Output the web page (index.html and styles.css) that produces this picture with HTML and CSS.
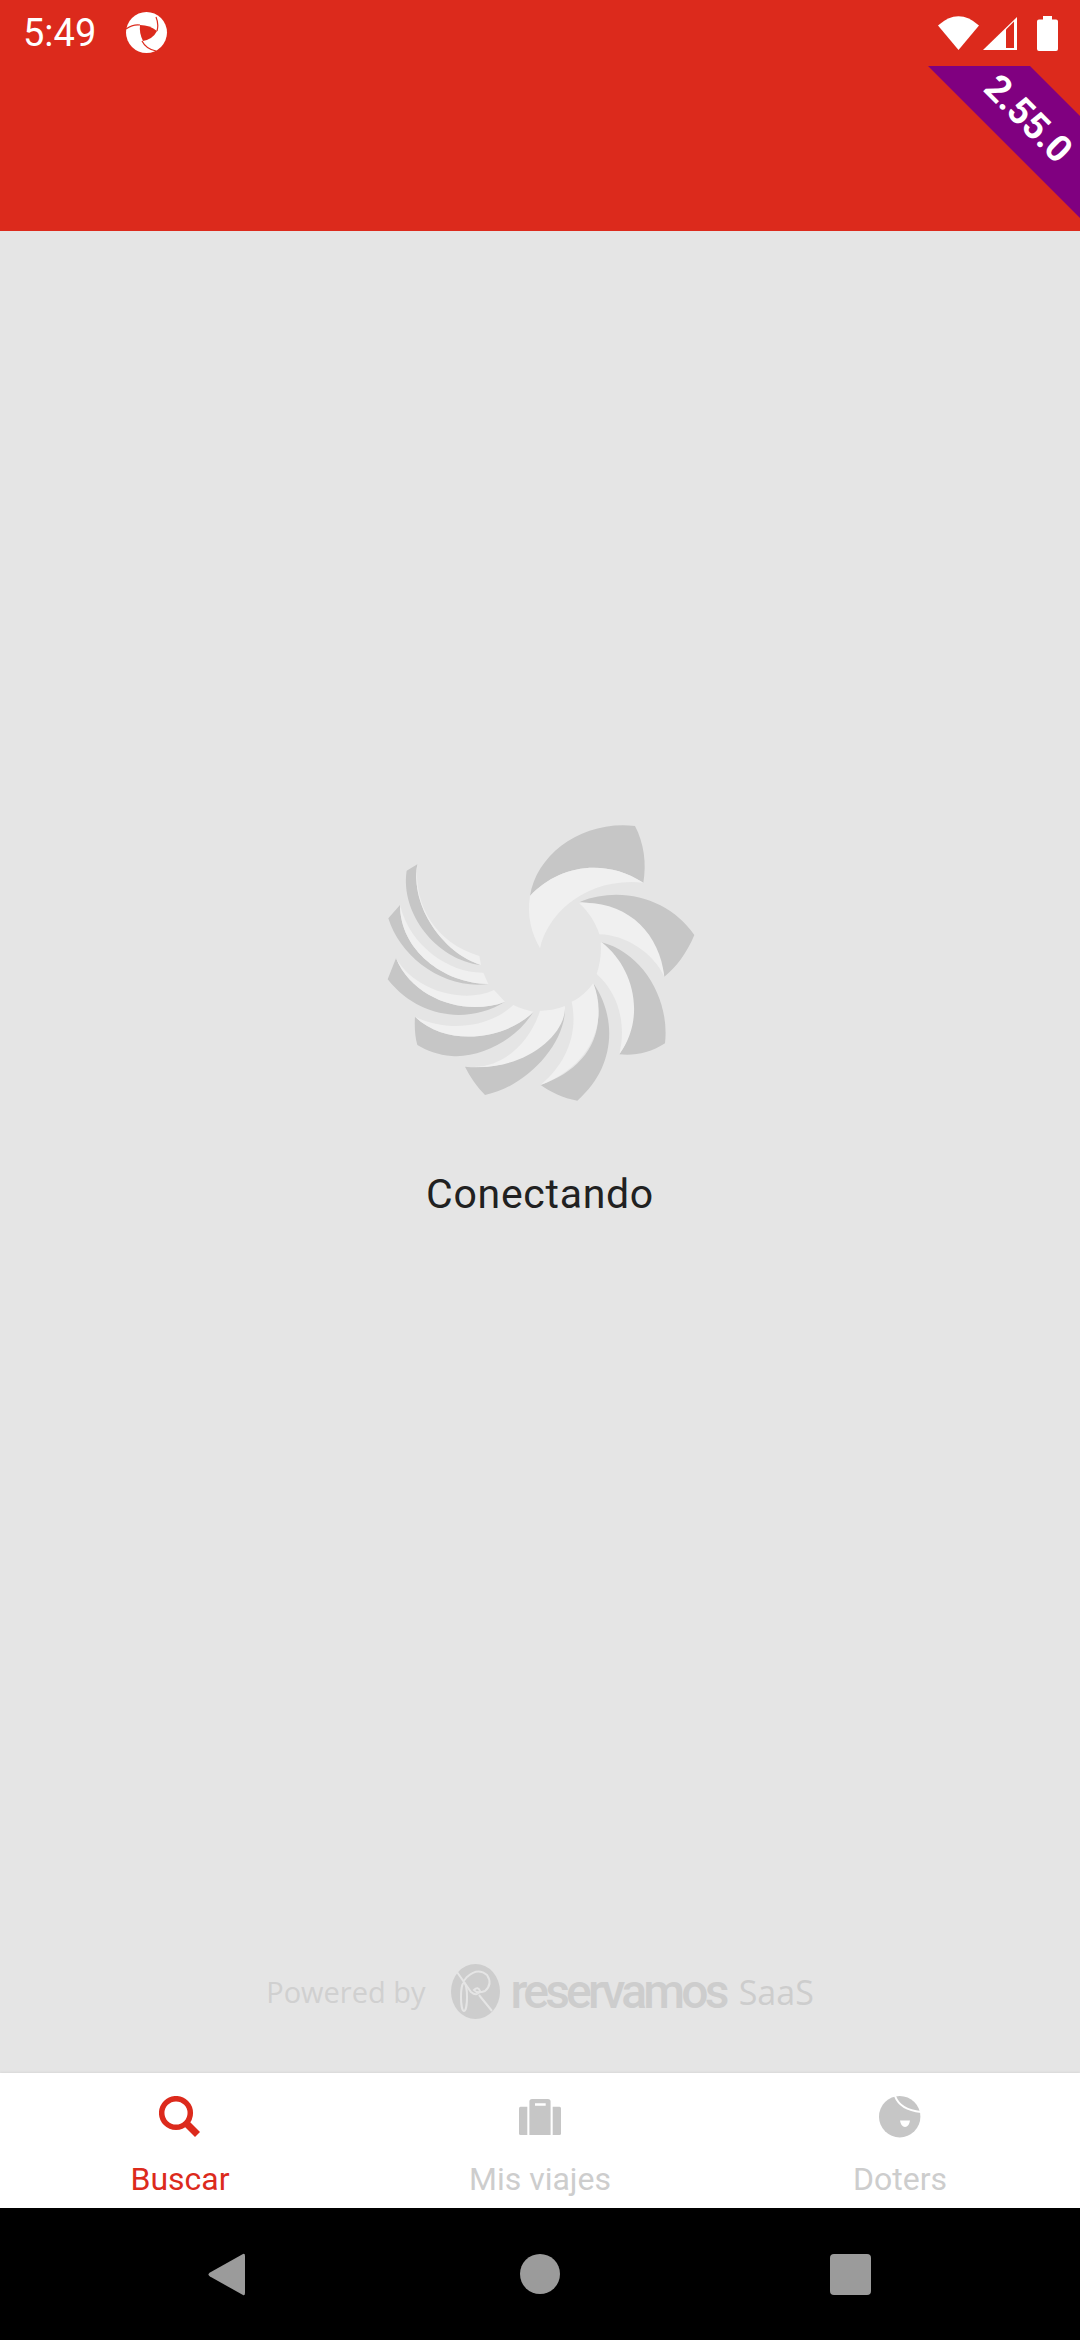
FILE: index.html
```html
<!DOCTYPE html>
<html lang="es">
<head>
    <meta charset="UTF-8">
    <title>Conectando</title>
    <link rel="stylesheet" href="styles.css">
</head>
<body>
<div class="screen">
    <div class="header">
        <div class="status">
            <span class="time">5:49</span>
            <svg class="app-icon" width="42" height="42" viewBox="0 0 42 42">
                <circle cx="20.5" cy="20.5" r="20.5" fill="#fff"/>
                <path d="M14 13Q24 13 31 19Q27 27 17 29Q13 21 14 13Z" fill="#dc2a1c"/>
                <path d="M0 17Q7 12 14 13M30 5Q33 12 31 19M16 29Q20 37 30 39" fill="none" stroke="#dc2a1c" stroke-width="1.2"/>
            </svg>
            <div class="status-right">
                <svg width="41" height="34" viewBox="0 0 41 34"><path d="M0 9.500Q20.500 -9 41 9.500L20.500 34Z" fill="#fff"/></svg>
                <svg class="signal" width="34" height="33" viewBox="0 0 34 33"><path d="M34 0V33H0Z" fill="#fff"/><path d="M23 12.500L31 4.500V31H23Z" fill="#dc2a1c"/></svg>
                <svg class="battery" width="21" height="35" viewBox="0 0 21 35"><path d="M6 0H15V3.500H19Q21 3.500 21 5.500V33Q21 35 19 35H2Q0 35 0 33V5.500Q0 3.500 2 3.500H6Z" fill="#fff"/></svg>
            </div>
        </div>
        <div class="banner"><span>2.55.0</span></div>
    </div>

    <div class="main">
        <svg class="logo" width="340" height="300" viewBox="0 0 1020 900">
            <g fill="#c6c6c6">
                <path d="M480 258C500 130 640 30 795 48C822 100 830 160 820 218C700 140 560 170 480 258Z"/>
                <path d="M630 275C760 225 900 270 973 375C950 430 920 470 883 500C870 400 760 285 630 275Z"/>
                <path d="M695 397C820 430 900 570 885 700C840 730 790 738 748 733C810 640 810 510 695 397Z"/>
                <path d="M670 520C740 620 740 770 622 872C580 865 540 845 512 825C640 780 720 680 670 520Z"/>
                <path d="M585 588C590 700 470 830 345 855C320 830 300 800 285 770C430 785 560 700 585 588Z"/>
                <path d="M135 620C240 720 420 680 490 605C440 690 330 745 245 738C205 735 170 722 142 705C135 680 133 650 135 620Z"/>
                <path d="M78 445C130 570 290 620 405 575C300 640 150 630 53 508Z"/>
                <path d="M90 285C90 420 220 520 355 522C220 540 90 440 55 325Z"/>
                <path d="M142 163C120 290 220 430 333 465C200 450 90 310 110 182Z"/>
            </g>
            <g fill="#f0f0f0">
                <path d="M480 258C470 320 485 370 510 415C530 320 640 200 820 218C700 140 560 170 480 258Z"/>
                <path d="M628 280C770 270 870 370 883 500C850 430 770 375 688 373C675 335 655 305 628 280Z"/>
                <path d="M695 397C790 470 830 620 748 733C770 640 745 550 680 492C690 460 695 430 692 400Z"/>
                <path d="M670 520C710 620 680 760 512 825C590 760 625 670 605 575C630 565 650 545 670 520Z"/>
                <path d="M287 768C390 785 480 700 510 602C535 603 560 597 585 588C590 680 450 790 287 768Z"/>
                <path d="M135 620C240 670 360 650 430 585C450 595 470 600 490 605C420 680 240 720 135 620Z"/>
                <path d="M78 445C140 550 290 580 372 540L405 575C290 620 130 570 78 445Z"/>
                <path d="M90 285C120 410 240 490 340 488L355 522C220 520 90 420 90 285Z"/>
                <path d="M142 163C130 290 200 400 328 438L333 465C220 430 120 290 142 163Z"/>
            </g>
        </svg>
        <div class="loading-text">Conectando</div>

        <div class="powered">
            <span class="powered-by">Powered by</span>
            <svg class="res-icon" width="49" height="55" viewBox="0 0 49 55">
                <ellipse cx="24.500" cy="27.500" rx="24.500" ry="27.500" fill="#cdcdcd"/>
                <g fill="none" stroke="#e5e5e5" stroke-width="2">
                    <ellipse cx="13" cy="33" rx="3" ry="14"/>
                    <path d="M6 8L20 28Q26 33 29 27Q27 22 23 26Q26 30 34 27Q42 20 36 11Q27 3 16 13L12 18"/>
                    <path d="M28 31L41 47"/>
                </g>
            </svg>
            <span class="res-word">reservamos</span>
            <span class="saas">SaaS</span>
        </div>
    </div>

    <div class="nav">
        <div class="nav-item active">
            <svg width="42" height="42" viewBox="0 0 42 42">
                <circle cx="17" cy="17" r="14.300" fill="none" stroke="#dc2a1c" stroke-width="5.500"/>
                <path d="M27 27L38.500 38.500" stroke="#dc2a1c" stroke-width="7"/>
            </svg>
            <span>Buscar</span>
        </div>
        <div class="nav-item">
            <svg width="42" height="42" viewBox="0 0 42 42">
                <path d="M1.500 10.700H8.300V39H1.500Q0 39 0 37.500V12.200Q0 10.700 1.500 10.700Z" fill="#c6c6c6"/>
                <path d="M33.700 10.700H40.500Q42 10.700 42 12.200V37.500Q42 39 40.500 39H33.700Z" fill="#c6c6c6"/>
                <path fill-rule="evenodd" d="M13 3H29Q31.600 3 31.600 5.600V39H10.400V5.600Q10.400 3 13 3ZM16 7.300V9.700H26.700V7.300Z" fill="#c6c6c6"/>
            </svg>
            <span>Mis viajes</span>
        </div>
        <div class="nav-item">
            <svg width="42" height="42" viewBox="0 0 42 42">
                <circle cx="20.700" cy="20.700" r="20.700" fill="#c6c6c6"/>
                <path d="M16 0Q21 14 42 16" fill="none" stroke="#fff" stroke-width="2"/>
                <path d="M21 24.500H31Q30 31 26 31Q22 31 21 24.500Z" fill="#fff"/>
            </svg>
            <span>Doters</span>
        </div>
    </div>

    <div class="sysnav">
        <svg width="43" height="45" viewBox="0 0 43 45">
            <path d="M36 2L3 20.500Q0 22.500 3 24.500L36 43Q38 44 38 41V4Q38 1 36 2Z" fill="#9b9b9b"/>
        </svg>
        <div class="sys-home"></div>
        <div class="sys-recent"></div>
    </div>
</div>
</body>
</html>
```

FILE: styles.css
```css
*{
    margin: 0;
    padding: 0;
    box-sizing: border-box;
}
body{
    width: 1080px;
    height: 2340px;
    overflow: hidden;
    font-family: Roboto, "Liberation Sans", sans-serif;
}
.screen{
    width: 1080px;
    height: 2340px;
    display: flex;
    flex-direction: column;
    background-color: #e5e5e5;
}

/* cabecera */
.header{
    height: 231px;
    background-color: #dc2a1c;
    position: relative;
}
.status{
    height: 66px;
    display: flex;
    align-items: center;
    padding: 0 22px 0 23px;
    color: #fff;
}
.time{
    font-size: 38px;
    line-height: 66px;
    width: 103px;
}
.status-right{
    margin-left: auto;
    display: flex;
    align-items: center;
}
.signal{
    margin-left: 4px;
}
.battery{
    margin-left: 20px;
}
.banner{
    position: absolute;
    top: 66px;
    right: 0;
    width: 152px;
    height: 152px;
    background-color: #800080;
    clip-path: polygon(0 0, 102px 0, 100% 50px, 100% 100%);
}
.banner span{
    position: absolute;
    left: 40px;
    top: 18px;
    width: 120px;
    height: 70px;
    line-height: 70px;
    text-align: center;
    font-size: 37px;
    font-weight: 700;
    color: #fff;
    transform: rotate(45deg);
}

/* centro */
.main{
    flex: 1;
    display: flex;
    flex-direction: column;
    align-items: center;
    padding-top: 579px;
}
.loading-text{
    margin-top: 59px;
    font-size: 41px;
    line-height: 50px;
    letter-spacing: 0.7px;
    color: #212121;
}
.powered{
    margin-top: auto;
    margin-bottom: 54px;
    display: flex;
    align-items: center;
    color: #cdcdcd;
}
.powered-by{
    font-family: "Open Sans", sans-serif;
    font-size: 29px;
    color: #d0d0d0;
    margin-right: 25px;
}
.res-word{
    margin-left: 11px;
    font-size: 48px;
    font-weight: 500;
    line-height: 55px;
    letter-spacing: -3.8px;
}
.saas{
    margin-left: 13px;
    font-family: "Open Sans", sans-serif;
    font-size: 34px;
    font-weight: 400;
}

/* menu de abajo */
.nav{
    height: 135px;
    display: flex;
    background-color: #fff;
    box-shadow: 0 -1px 2px #d8d8d8;
}
.nav-item{
    width: 360px;
    display: flex;
    flex-direction: column;
    align-items: center;
    padding-top: 23px;
    font-size: 32px;
    color: #cdcdcd;
}
.nav-item span{
    margin-top: 16px;
    line-height: 50px;
}
.nav-item.active{
    color: #dc2a1c;
}

/* barra del sistema */
.sysnav{
    height: 132px;
    background-color: #000;
    display: flex;
    align-items: center;
    justify-content: space-between;
    padding: 0 209px 0 207px;
}
.sys-home{
    width: 40px;
    height: 40px;
    border-radius: 50%;
    background-color: #9b9b9b;
}
.sys-recent{
    width: 41px;
    height: 41px;
    border-radius: 4px;
    background-color: #9b9b9b;
}
```
